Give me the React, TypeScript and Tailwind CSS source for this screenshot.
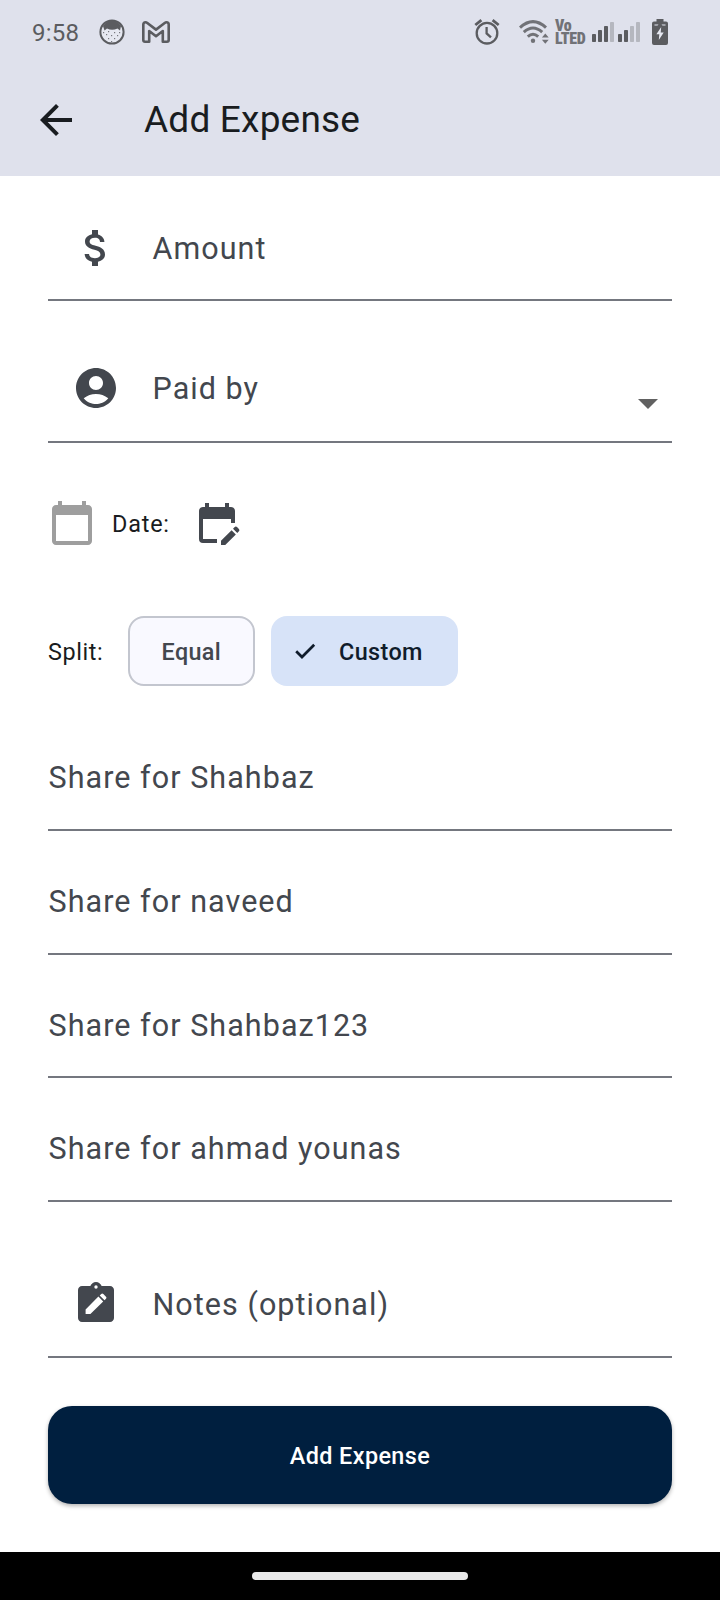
import React from "react";
import {
  MdAccountCircle,
  MdArrowBack,
  MdAttachMoney,
  MdCalendarToday,
  MdEditCalendar,
} from "react-icons/md";

const shares = ["Shahbaz", "naveed", "Shahbaz123", "ahmad younas"];

function CatIcon() {
  return (
    <svg viewBox="0 0 26 26" className="size-[26px]">
      <circle cx="13" cy="13" r="11.6" fill="#e6e8f1" stroke="#5b5c60" strokeWidth="2" />
      <path d="M4 7Q8 1.5 13 1.5T22 7L21 11.5 18.5 9.5Q13 12 8 9.5L5.5 11.5Z" fill="#5b5c60" />
      <g fill="#77787e">
        <rect x="4" y="13" width="1.2" height="1.2" />
        <rect x="7" y="15" width="1.2" height="1.2" />
        <rect x="9" y="12" width="1.2" height="1.2" />
        <rect x="12" y="16" width="1.2" height="1.2" />
        <rect x="15" y="13" width="1.2" height="1.2" />
        <rect x="18" y="16" width="1.2" height="1.2" />
        <rect x="20" y="13" width="1.2" height="1.2" />
        <rect x="9" y="19" width="1.2" height="1.2" />
        <rect x="15" y="19" width="1.2" height="1.2" />
        <rect x="12" y="22" width="1.2" height="1.2" />
      </g>
    </svg>
  );
}

function MailIcon() {
  return (
    <svg viewBox="0 0 28 22" className="h-[22px] w-7" fill="none" stroke="#5b5c60" strokeWidth="2.6" strokeLinejoin="round">
      <path d="M1.3 3.600Q1.3 1.300 3.600 1.300Q4.400 1.300 5.300 2L14 8.600L22.700 2Q23.600 1.300 24.400 1.300Q26.700 1.300 26.700 3.600V19Q26.700 20.700 25 20.700H20.800V10L14 15.200L7.200 10V20.700H3Q1.300 20.700 1.300 19Z" />
    </svg>
  );
}

function AlarmIcon() {
  return (
    <svg viewBox="0 0 26 26" className="size-[26px]" fill="none" stroke="#5b5c60" strokeWidth="2.3">
      <circle cx="13" cy="14.2" r="10.3" />
      <path d="M12.600 8v6.4l4.4 4" />
      <path d="M1.3 6L7.4 1.2M24.7 6L18.6 1.2" strokeWidth="2.8" />
    </svg>
  );
}

function WifiIcon() {
  return (
    <svg viewBox="0 0 30 24" className="h-6 w-[30px]" fill="none" stroke="#717277" strokeWidth="3">
      <path d="M1 7.6Q14 -4.4 27 7.6" />
      <path d="M4.8 12.2Q14 3.8 23.2 12.2" />
      <path d="M8.8 16.6Q14 12 19.2 16.6" />
      <circle cx="14" cy="20.8" r="2.200" fill="#717277" stroke="none" />
      <path d="M26.3 13.4l3.4 4.2h-6.8zM26.3 23.8l3.4-4h-6.8z" fill="#717277" stroke="none" />
    </svg>
  );
}

function SignalIcon({ strength }: { strength: number }) {
  return (
    <svg viewBox="0 0 22 20" className="h-5 w-[22px]">
      {[8, 12, 16, 20].map((h, i) => (
        <rect key={h} x={i * 6} y={20 - h} width="4" height={h} rx="0.8" fill={i < strength ? "#5b5c60" : "#b5b7bf"} />
      ))}
    </svg>
  );
}

function BatteryIcon() {
  return (
    <svg viewBox="0 0 16 26" className="h-[26px] w-4">
      <path d="M4.5 0h7v2.4H14a2 2 0 0 1 2 2V24a2 2 0 0 1-2 2H2a2 2 0 0 1-2-2V4.400a2 2 0 0 1 2-2h2.500z" fill="#5b5c60" />
      <path d="M9.200 8L4.400 15.300H7.300L6.800 21L11.700 13.600H8.700ZM2.500 5.500H6.500L5.500 6.600H2.500ZM13.500 5.500H9.500L10.500 6.600H13.500Z" fill="#e6e8f1" />
    </svg>
  );
}

function CheckIcon() {
  return (
    <svg viewBox="0 0 28 28" className="size-7" fill="none" stroke="currentColor" strokeWidth="2.700">
      <path d="M5.200 14.200L11 20L23.200 7.800" />
    </svg>
  );
}

function NoteIcon() {
  return (
    <svg viewBox="0 0 24 24" className="size-12" fill="currentColor">
      <path d="M19 3h-4.180C14.400 1.840 13.300 1 12 1s-2.400.84-2.820 2H5c-1.100 0-2 .9-2 2v14c0 1.100.9 2 2 2h14c1.100 0 2-.9 2-2V5c0-1.100-.9-2-2-2z" />
      <circle cx="12" cy="3.500" r="0.850" fill="white" />
      <path d="M6.800 17v-2.300l6.400-6.400 2.400 2.400L9.200 17zM17 9.400l-.75.75-2.400-2.400.75-.75a.75.75 0 0 1 1.060 0l1.340 1.340a.75.75 0 0 1 0 1.060z" fill="white" />
    </svg>
  );
}

export default function App() {
  return (
    <div className="flex h-[1600px] w-[720px] flex-col bg-white font-['Roboto',sans-serif] text-[#43474e]">
      <header className="h-44 bg-[#dfe1ec]">
        <div className="flex h-16 items-center pl-8 text-[#5b5c60]">
          <span className="w-[67px] pt-0.5 text-[24px] tracking-[0.2px]">9:58</span>
          <CatIcon />
          <div className="ml-[17px]"><MailIcon /></div>
          <div className="ml-[304px]"><AlarmIcon /></div>
          <div className="ml-[19px]"><WifiIcon /></div>
          <div className="ml-[6px] w-[30px] whitespace-pre-line font-['Roboto_Condensed','Roboto',sans-serif] text-[16px] leading-[13px] font-black tracking-[-0.3px] text-[#717277]">
            {"Vo\nLTED"}
          </div>
          <div className="ml-[7px]"><SignalIcon strength={3} /></div>
          <div className="ml-1"><SignalIcon strength={2} /></div>
          <div className="ml-3"><BatteryIcon /></div>
        </div>
        <div className="flex h-28 items-center pl-8 text-[#191c20]">
          <MdArrowBack className="size-12" />
          <h1 className="ml-16 text-[37px] tracking-[0.2px]">Add Expense</h1>
        </div>
      </header>

      <main className="flex flex-1 flex-col px-12 text-[30.500px] tracking-[1.050px]">
        <div className="flex h-[125px] items-center border-b-2 border-[#74777f] pt-[21px] pl-6">
          <MdAttachMoney className="size-12" />
          <span className="ml-[32.500px] pt-[2px]">Amount</span>
        </div>
        <div className="mt-[50px] flex h-[92px] items-center border-b-2 border-[#74777f] pb-[17px] pl-6">
          <MdAccountCircle className="size-12" />
          <span className="ml-[32.500px] pt-[2px]">Paid by</span>
          <svg viewBox="0 0 20 10" className="mt-[32px] mr-[14px] ml-auto h-2.5 w-5">
            <path d="M0 0h20L10 10z" fill="#616161" />
          </svg>
        </div>

        <div className="mt-14 flex h-12 items-center text-[23.400px] tracking-[0.800px] text-[#191c20]">
          <MdCalendarToday className="size-12 text-[#9e9e9e]" />
          <span className="mt-[3px] ml-4">Date:</span>
          <MdEditCalendar className="ml-[23.500px] size-12 text-[#43474e]" />
        </div>

        <div className="mt-[69px] flex h-[70px] items-center text-[23.400px] tracking-[0.600px] text-[#191c20]">
          <span className="w-[79.500px] pt-[3px]">Split:</span>
          <button className="flex h-[70px] w-[127.500px] items-center justify-center rounded-2xl border-2 border-[#c3c6cf] bg-[#f9f9ff] pt-[3px] font-medium tracking-[0.300px] text-[#43474e]">Equal</button>
          <button className="ml-4 flex h-[70px] w-[186.500px] items-center rounded-2xl bg-[#d7e3f8] pl-5 font-medium tracking-[0.400px] text-[#101c2b]">
            <CheckIcon />
            <span className="ml-5 pt-[3px]">Custom</span>
          </button>
        </div>

        <div className="mt-[21px]">
          {shares.map((name) => (
            <div key={name} className="flex h-[123.750px] items-center border-b-2 border-[#74777f] pt-[20px] pl-[0.500px]">
              Share for {name}
            </div>
          ))}
        </div>

        <div className="mt-[54px] flex h-[102px] items-center border-b-2 border-[#74777f] pb-1 pl-6">
          <NoteIcon />
          <span className="ml-[32.500px] pt-[2px]">Notes (optional)</span>
        </div>

        <button className="mt-12 flex h-[98px] items-center justify-center rounded-3xl bg-[#001f3f] pt-[3px] text-[23.400px] font-medium tracking-[0.400px] text-white shadow-[0_2px_4px_rgba(0,0,0,0.3)]">
          Add Expense
        </button>
      </main>

      <footer className="flex h-12 items-center justify-center bg-black">
        <div className="h-2 w-[216px] rounded-full bg-[#e9e9e9]" />
      </footer>
    </div>
  );
}
